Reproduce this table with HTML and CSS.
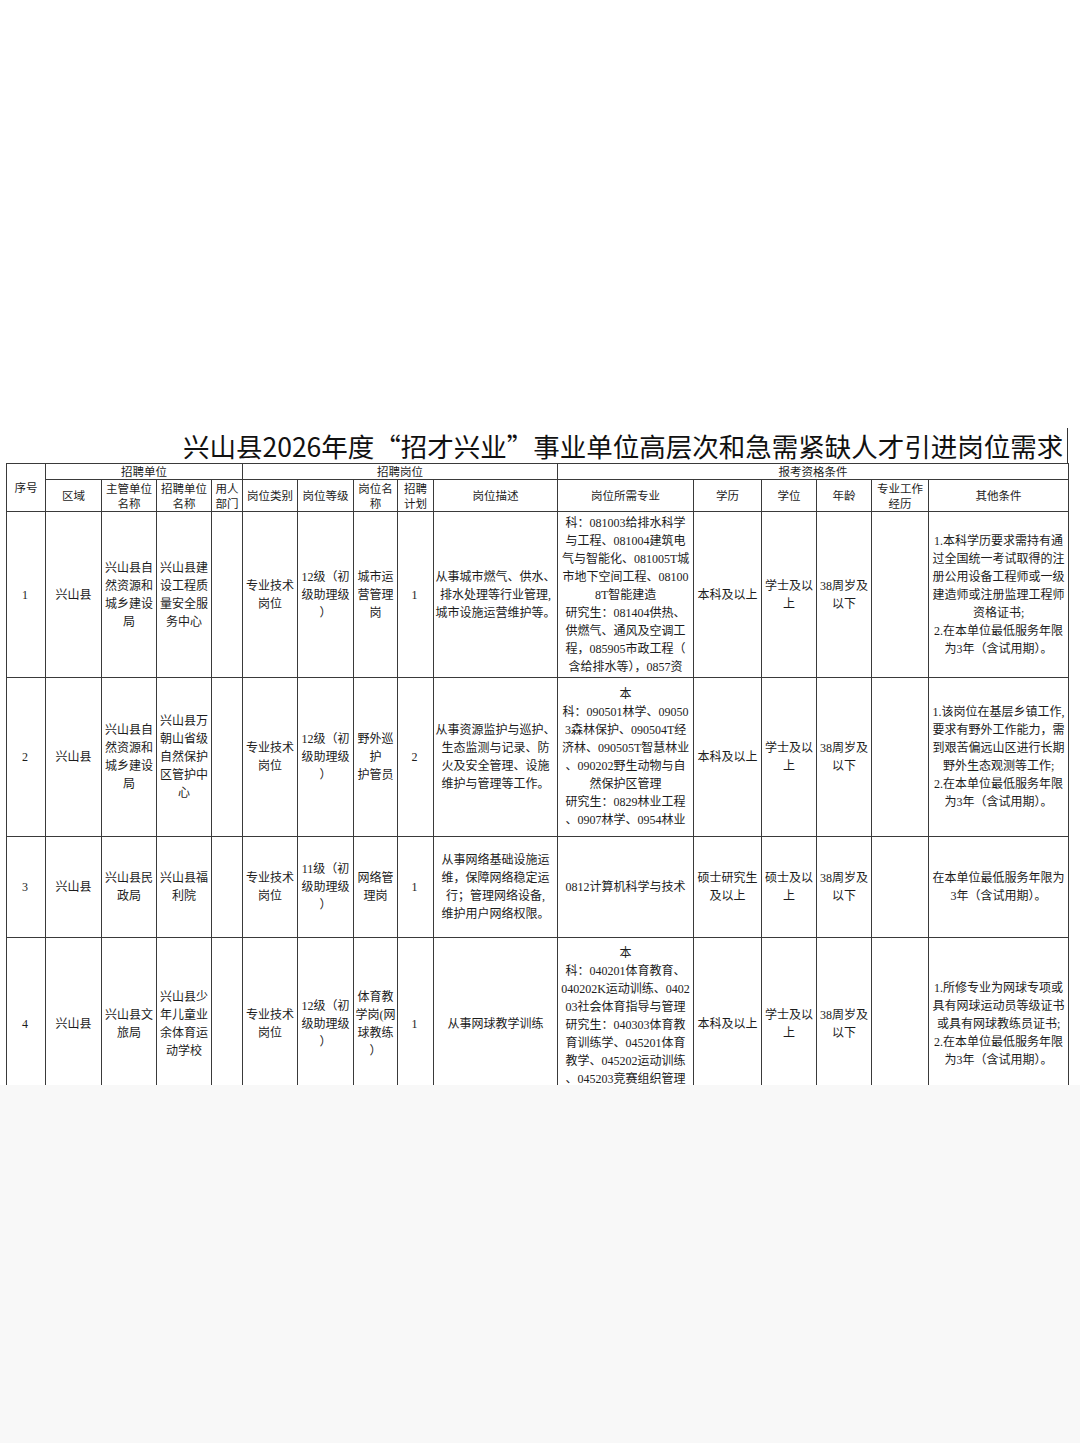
FILE: index.html
```html
<!DOCTYPE html>
<html lang="zh-CN">
<head>
<meta charset="utf-8">
<title>兴山县2026年度“招才兴业”事业单位高层次和急需紧缺人才引进岗位需求</title>
<link rel="stylesheet" href="styles.css">
</head>
<body>
<div class="page">
  <div class="top-space"></div>
  <div class="sheet">
    <div class="title">兴山县2026年度“招才兴业”事业单位高层次和急需紧缺人才引进岗位需求</div>
    <table class="grid">
      <colgroup>
        <col style="width:39px"><col style="width:56px"><col style="width:55px"><col style="width:55px">
        <col style="width:31px"><col style="width:55px"><col style="width:56px"><col style="width:44px">
        <col style="width:36px"><col style="width:124px"><col style="width:136px"><col style="width:68px">
        <col style="width:55px"><col style="width:55px"><col style="width:57px"><col style="width:140px">
      </colgroup>
      <thead>
        <tr class="h1">
          <th rowspan="2" class="hd">序号</th>
          <th colspan="4">招聘单位</th>
          <th colspan="5">招聘岗位</th>
          <th colspan="6">报考资格条件</th>
        </tr>
        <tr class="h2">
          <th>区域</th>
          <th>主管单位<br>名称</th>
          <th>招聘单位<br>名称</th>
          <th>用人<br>部门</th>
          <th>岗位类别</th>
          <th>岗位等级</th>
          <th>岗位名<br>称</th>
          <th>招聘<br>计划</th>
          <th>岗位描述</th>
          <th>岗位所需专业</th>
          <th>学历</th>
          <th>学位</th>
          <th>年龄</th>
          <th>专业工作<br>经历</th>
          <th>其他条件</th>
        </tr>
      </thead>
      <tbody>
        <tr class="r1">
          <td class="num">1</td>
          <td>兴山县</td>
          <td>兴山县自<br>然资源和<br>城乡建设<br>局</td>
          <td>兴山县建<br>设工程质<br>量安全服<br>务中心</td>
          <td></td>
          <td>专业技术<br>岗位</td>
          <td>12级（初<br>级助理级<br>）</td>
          <td>城市运<br>营管理<br>岗</td>
          <td class="num">1</td>
          <td>从事城市燃气、供水、<br>排水处理等行业管理,<br>城市设施运营维护等。</td>
          <td>科：081003给排水科学<br>与工程、081004建筑电<br>气与智能化、081005T城<br>市地下空间工程、08100<br>8T智能建造<br>研究生：081404供热、<br>供燃气、通风及空调工<br>程，085905市政工程（<br>含给排水等），0857资</td>
          <td>本科及以上</td>
          <td>学士及以<br>上</td>
          <td>38周岁及<br>以下</td>
          <td></td>
          <td>1.本科学历要求需持有通<br>过全国统一考试取得的注<br>册公用设备工程师或一级<br>建造师或注册监理工程师<br>资格证书;<br>2.在本单位最低服务年限<br>为3年（含试用期）。</td>
        </tr>
        <tr class="r2">
          <td class="num">2</td>
          <td>兴山县</td>
          <td>兴山县自<br>然资源和<br>城乡建设<br>局</td>
          <td>兴山县万<br>朝山省级<br>自然保护<br>区管护中<br>心</td>
          <td></td>
          <td>专业技术<br>岗位</td>
          <td>12级（初<br>级助理级<br>）</td>
          <td>野外巡<br>护<br>护管员</td>
          <td class="num">2</td>
          <td>从事资源监护与巡护、<br>生态监测与记录、防<br>火及安全管理、设施<br>维护与管理等工作。</td>
          <td>本<br>科：090501林学、09050<br>3森林保护、090504T经<br>济林、090505T智慧林业<br>、090202野生动物与自<br>然保护区管理<br>研究生：0829林业工程<br>、0907林学、0954林业</td>
          <td>本科及以上</td>
          <td>学士及以<br>上</td>
          <td>38周岁及<br>以下</td>
          <td></td>
          <td>1.该岗位在基层乡镇工作,<br>要求有野外工作能力，需<br>到艰苦偏远山区进行长期<br>野外生态观测等工作;<br>2.在本单位最低服务年限<br>为3年（含试用期）。</td>
        </tr>
        <tr class="r3">
          <td class="num">3</td>
          <td>兴山县</td>
          <td>兴山县民<br>政局</td>
          <td>兴山县福<br>利院</td>
          <td></td>
          <td>专业技术<br>岗位</td>
          <td>11级（初<br>级助理级<br>）</td>
          <td>网络管<br>理岗</td>
          <td class="num">1</td>
          <td>从事网络基础设施运<br>维，保障网络稳定运<br>行；管理网络设备,<br>维护用户网络权限。</td>
          <td>0812计算机科学与技术</td>
          <td>硕士研究生<br>及以上</td>
          <td>硕士及以<br>上</td>
          <td>38周岁及<br>以下</td>
          <td></td>
          <td>在本单位最低服务年限为<br>3年（含试用期）。</td>
        </tr>
        <tr class="r4">
          <td class="num">4</td>
          <td>兴山县</td>
          <td>兴山县文<br>旅局</td>
          <td>兴山县少<br>年儿童业<br>余体育运<br>动学校</td>
          <td></td>
          <td>专业技术<br>岗位</td>
          <td>12级（初<br>级助理级<br>）</td>
          <td>体育教<br>学岗(网<br>球教练<br>）</td>
          <td class="num">1</td>
          <td>从事网球教学训练</td>
          <td class="top">本<br>科：040201体育教育、<br>040202K运动训练、0402<br>03社会体育指导与管理<br>研究生：040303体育教<br>育训练学、045201体育<br>教学、045202运动训练<br>、045203竞赛组织管理</td>
          <td>本科及以上</td>
          <td>学士及以<br>上</td>
          <td>38周岁及<br>以下</td>
          <td></td>
          <td>1.所修专业为网球专项或<br>具有网球运动员等级证书<br>或具有网球教练员证书;<br>2.在本单位最低服务年限<br>为3年（含试用期）。</td>
        </tr>
      </tbody>
    </table>
  </div>
  <div class="bottom-space"></div>
</div>
</body>
</html>
```

FILE: styles.css
```css
html, body {
  margin: 0;
  padding: 0;
  background: #ffffff;
}

.page {
  width: 1080px;
  height: 1443px;
  display: flex;
  flex-direction: column;
  overflow: hidden;
}

.top-space {
  height: 428px;
  flex: none;
  background: #ffffff;
}

.sheet {
  height: 657px;
  flex: none;
  overflow: hidden;
  background: #ffffff;
  padding-left: 6px;
  box-sizing: border-box;
}

.bottom-space {
  flex: 1;
  background: #f8f8f8;
}

.title {
  width: 1062px;
  height: 35px;
  box-sizing: border-box;
  padding-left: 177px;
  border-right: 1px solid #333;
  font-family: "Noto Sans CJK SC", "Noto Sans", sans-serif;
  font-size: 26.5px;
  line-height: 35px;
  color: #111;
  white-space: nowrap;
}

.grid {
  border-collapse: collapse;
  table-layout: fixed;
  width: 1063px;
  color: #1c1c1c;
}

.grid th,
.grid td {
  border: 1px solid #3a3a3a;
  padding: 0;
  text-align: center;
  vertical-align: middle;
  white-space: nowrap;
  overflow: visible;
}

.grid th {
  font-family: "Noto Sans CJK SC", sans-serif;
  font-weight: normal;
  font-size: 11.5px;
  line-height: 14.5px;
  color: #1c1c1c;
}

.h1 { height: 16px; }
.h1 th { line-height: 13px; }
.h2 { height: 32px; }

.grid td {
  font-family: "Liberation Serif", "Noto Sans CJK SC", serif;
  font-size: 12px;
  line-height: 18px;
}

.grid td.num {
  padding-right: 2px;
}

.r1 { height: 166px; }
.r2 { height: 159px; }
.r3 { height: 101px; }
.r4 { height: 172px; }

.grid td.top {
  vertical-align: top;
  padding-top: 6px;
}
```
